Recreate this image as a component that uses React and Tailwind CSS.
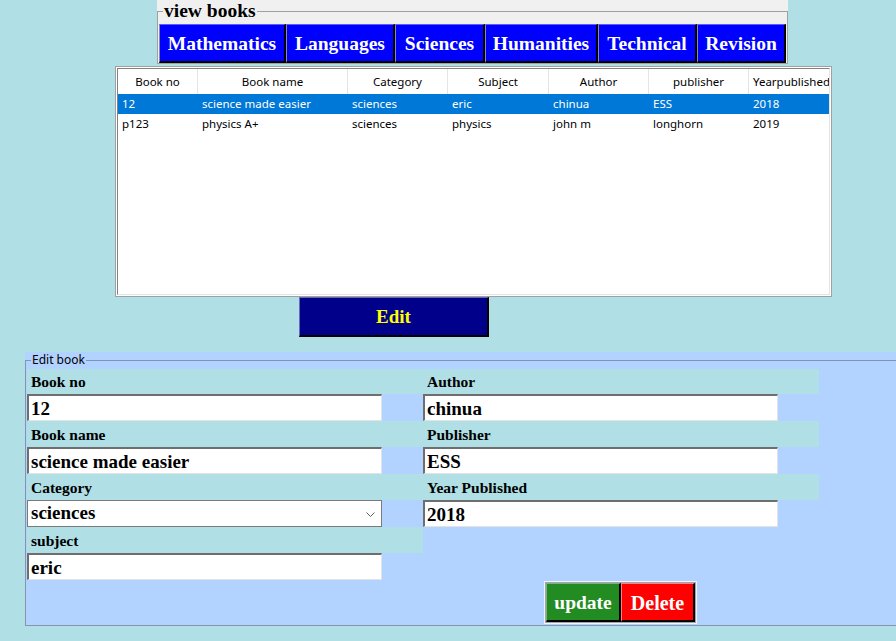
import React from 'react';

const subjects = [
  { name: 'Mathematics', w: 'w-[127px]' },
  { name: 'Languages', w: 'w-[109px]' },
  { name: 'Sciences', w: 'w-[90px]' },
  { name: 'Humanities', w: 'w-[113px]' },
  { name: 'Technical', w: 'w-[99px]' },
  { name: 'Revision', w: 'w-[89px]' },
];

const columns = ['Book no', 'Book name', 'Category', 'Subject', 'Author', 'publisher', 'Yearpublished'];

const books = [
  ['12', 'science made easier', 'sciences', 'eric', 'chinua', 'ESS', '2018'],
  ['p123', 'physics A+', 'sciences', 'physics', 'john m', 'longhorn', '2019'],
];

const gridCols = 'grid grid-cols-[80px_150px_100px_101px_100px_100px_100px]';

const Label = ({ children, first }) => (
  <div
    className={`${first ? 'h-[25px] mt-px pt-[4px]' : 'h-[26px] pt-[5px]'} w-[396px] bg-[#B0E0E6] pl-[4px] font-['Liberation_Serif',serif] text-[15.5px] leading-[17px] font-bold text-black`}
  >
    {children}
  </div>
);

const TextBox = ({ value }) => (
  <div className="h-[27px] w-[355px] bg-white border-t-2 border-l-2 border-t-[#6e6e6e] border-l-[#6e6e6e] border-b border-r border-b-[#e3e3e3] border-r-[#e3e3e3] pl-[2px] font-['Liberation_Serif',serif] text-[19px] leading-[25px] font-bold text-black whitespace-nowrap overflow-hidden">
    {value}
  </div>
);

const SelectBox = ({ value }) => (
  <div className="h-[27px] w-[355px] bg-white border border-[#7a7a7a] flex items-center justify-between pl-[3px] pr-[6px] font-['Liberation_Serif',serif] text-[19px] font-bold text-black">
    <span>{value}</span>
    <svg width="9" height="5" viewBox="0 0 9 5" className="mt-[2px]">
      <path d="M0.5 0.5 L4.5 4.5 L8.5 0.5" fill="none" stroke="#606060" strokeWidth="1" />
    </svg>
  </div>
);

export default function App() {
  return (
    <div className="w-[896px] h-[641px] overflow-hidden bg-[#B0E0E6]">
      {/* view books group */}
      <div className="ml-[157px] w-[631px] h-[64px] bg-[#F0F0F0]">
        <fieldset className="h-full border border-[#a0a0a0]">
          <legend className="ml-[5px] px-[1px] font-['Liberation_Serif',serif] text-[19.5px] leading-[22px] font-bold text-black">
            view books
          </legend>
          <div className="mt-[2px] ml-px flex h-[39px]">
            {subjects.map((s) => (
              <button
                key={s.name}
                className={`${s.w} h-full pt-[2px] bg-[#0000FF] border-l border-t border-l-[#8a8aa8] border-t-[#5c5cff] border-r-2 border-b-2 border-r-black border-b-black font-['Liberation_Serif',serif] text-[19.5px] font-bold text-white`}
              >
                {s.name}
              </button>
            ))}
          </div>
        </fieldset>
      </div>

      {/* books table */}
      <div className="mt-[2px] ml-[115px] w-[717px] h-[231px] bg-white border border-[#a0a0a0] p-px">
        <div className="h-full border-t border-l border-[#828282] border-r border-b border-r-[#e3e3e3] border-b-[#e3e3e3] overflow-hidden font-['Noto_Sans',sans-serif] text-[11.5px] text-black">
          <div className={`${gridCols} h-[25px]`}>
            {columns.map((c, i) => (
              <div
                key={c}
                className={`${i === 6 ? 'justify-start pl-[4px]' : 'justify-center'} flex items-center border-r border-[#e5e5e5] whitespace-nowrap overflow-hidden`}
              >
                {c}
              </div>
            ))}
          </div>
          {books.map((row, r) => (
            <div
              key={row[0]}
              className={`${gridCols} h-[20px] ${r === 0 ? 'bg-[#0078D7] text-white' : 'bg-white text-black'}`}
            >
              {row.map((cell, i) => (
                <div key={i} className="pl-[4px] leading-[20px] whitespace-nowrap overflow-hidden">
                  {cell}
                </div>
              ))}
            </div>
          ))}
        </div>
      </div>

      {/* edit button */}
      <button className="ml-[299px] w-[190px] h-[40px] pt-[2px] bg-[#00008B] border-l border-t border-l-[#6b6bb5] border-t-[#6b6bb5] border-r-2 border-b-2 border-r-black border-b-black font-['Liberation_Serif',serif] text-[19px] font-bold text-[#FFFF00]">
        Edit
      </button>

      {/* edit book group */}
      <div className="mt-[15px] ml-[25px] w-[890px] h-[274px] bg-[#B2D2FF]">
        <fieldset className="h-full border border-[#8494ad]">
          <legend className="ml-[5px] px-[1px] font-['Noto_Sans',sans-serif] text-[12px] leading-[16px] text-black">
            Edit book
          </legend>
          <div className="ml-px flex">
            <div className="flex flex-col w-[396px]">
              <Label first>Book no</Label>
              <TextBox value="12" />
              <Label>Book name</Label>
              <TextBox value="science made easier" />
              <Label>Category</Label>
              <SelectBox value="sciences" />
              <Label>subject</Label>
              <TextBox value="eric" />
            </div>
            <div className="flex flex-col w-[396px]">
              <Label first>Author</Label>
              <TextBox value="chinua" />
              <Label>Publisher</Label>
              <TextBox value="ESS" />
              <Label>Year Published</Label>
              <TextBox value="2018" />
            </div>
          </div>
          <div className="mt-px ml-[518px] w-[153px] h-[43px] flex border border-[#f4f4f4] bg-[#9aa6b8] p-px">
            <button className="w-[75px] h-full pt-[1px] bg-[#228B22] border-l border-t border-l-[#7fb07f] border-t-[#7fb07f] border-r-2 border-b-2 border-r-black border-b-black font-['Liberation_Serif',serif] text-[19.5px] font-bold text-white">
              update
            </button>
            <button className="w-[74px] h-full pt-[1px] bg-[#FF0000] border-l border-t border-l-[#ff8080] border-t-[#ff8080] border-r-2 border-b-2 border-r-black border-b-black font-['Liberation_Serif',serif] text-[20px] font-bold text-white">
              Delete
            </button>
          </div>
        </fieldset>
      </div>
    </div>
  );
}
